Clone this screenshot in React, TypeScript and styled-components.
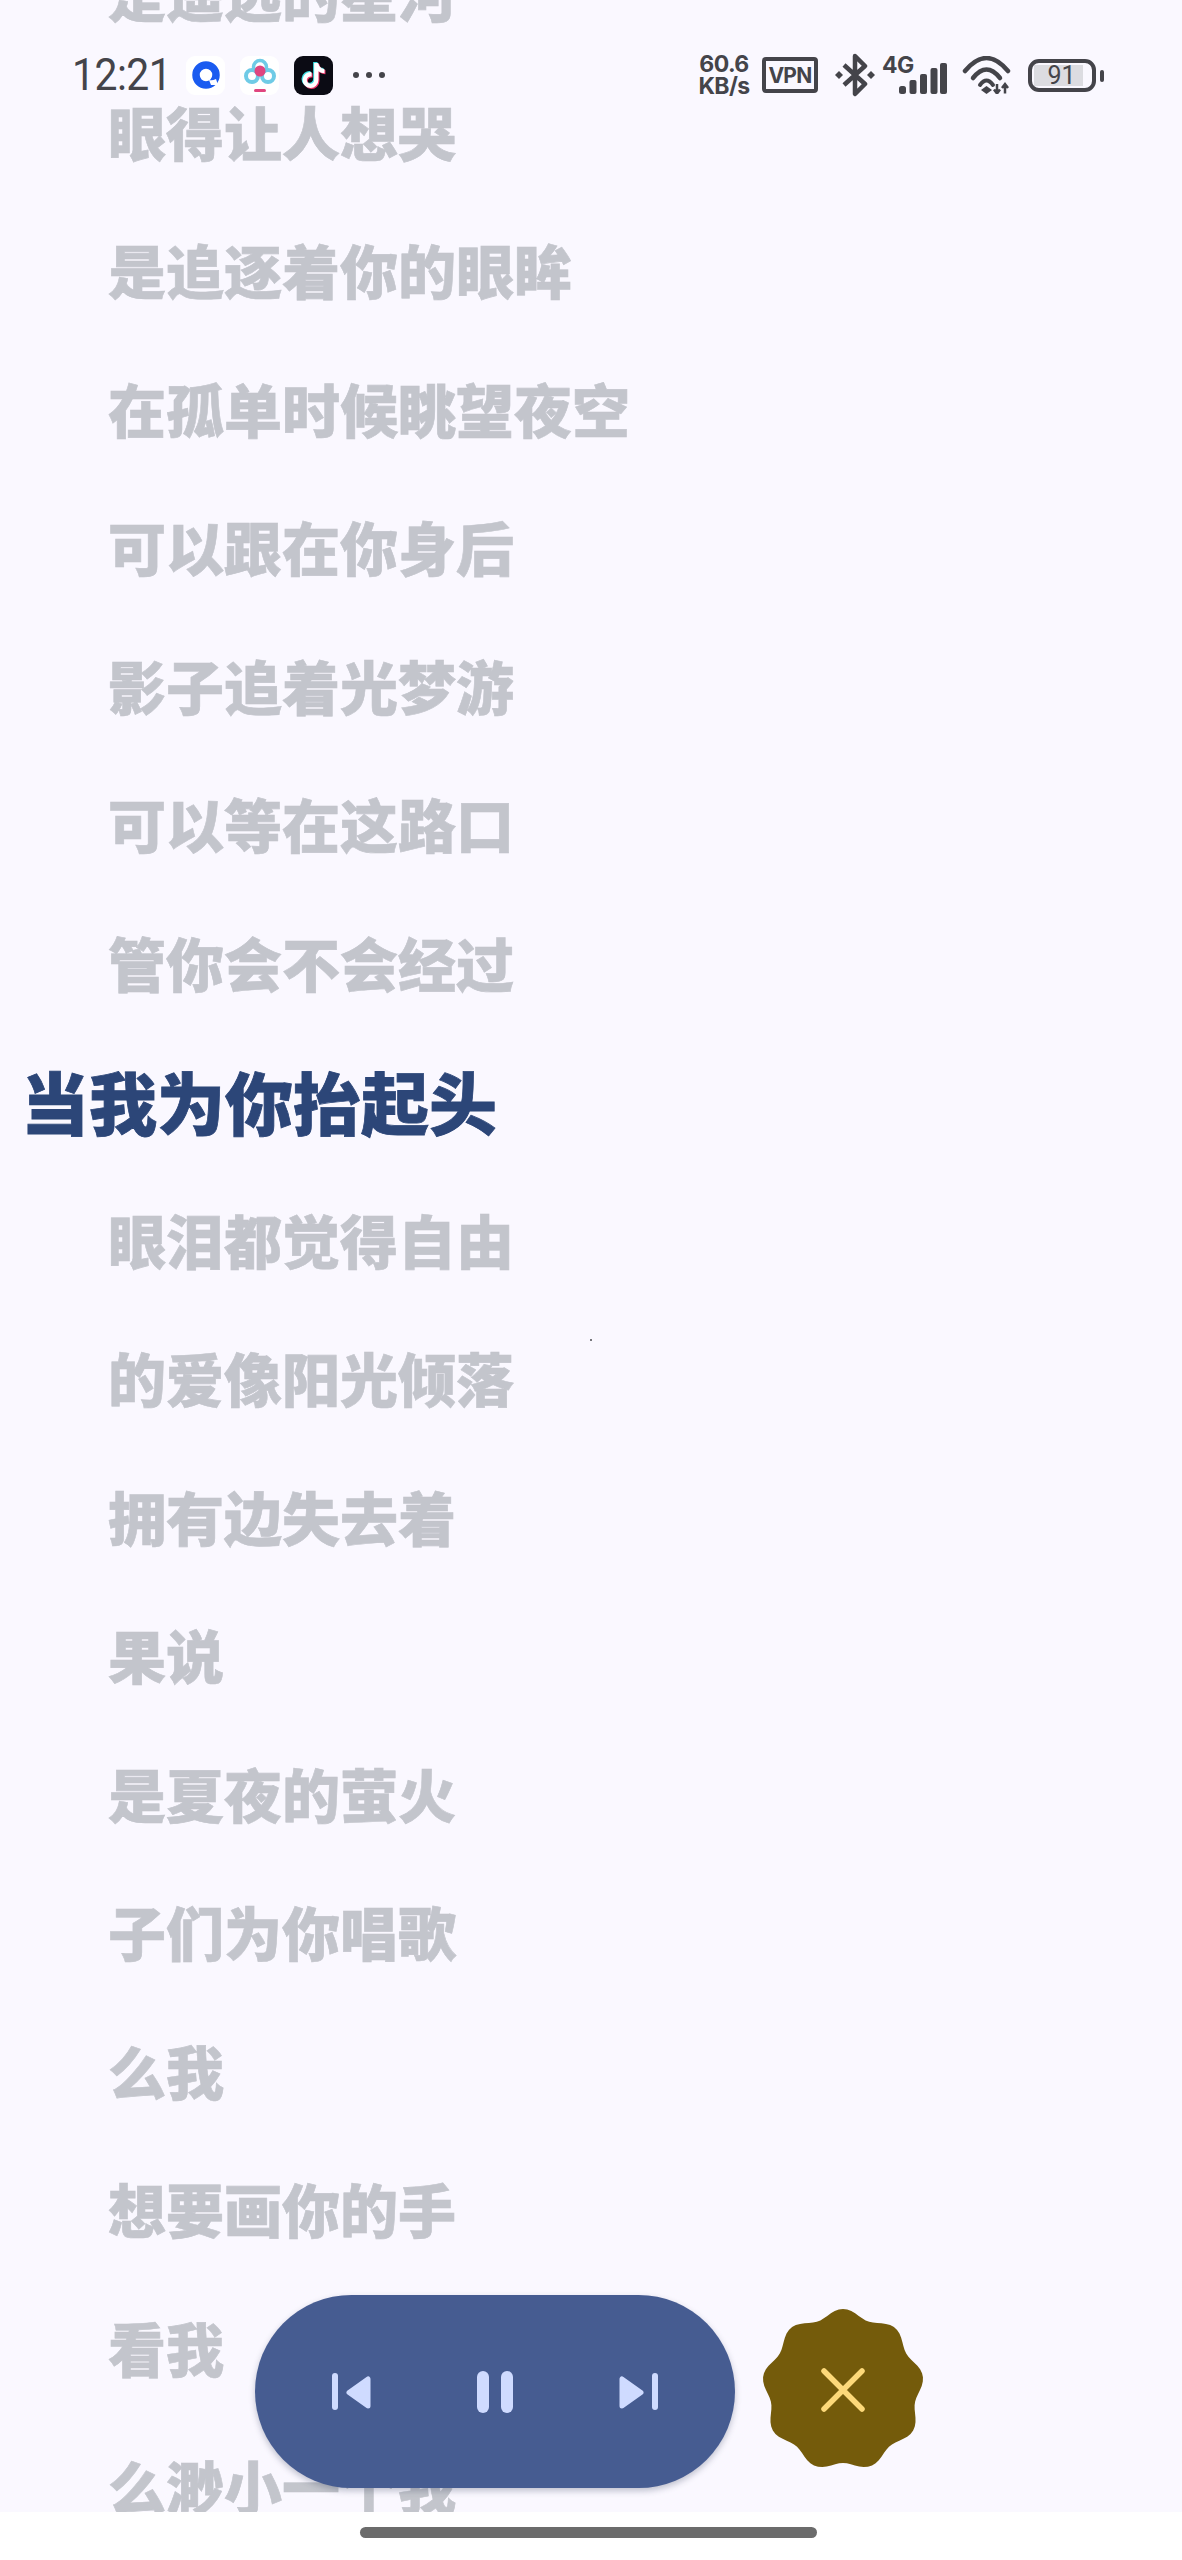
import React from 'react';
import styled, { createGlobalStyle } from 'styled-components';
import { FaTiktok } from 'react-icons/fa';

const GlobalStyle = createGlobalStyle`
  html, body {
    margin: 0;
    padding: 0;
    background: #ffffff;
  }
`;

const Page = styled.div`
  position: relative;
  width: 1182px;
  height: 2560px;
  overflow: hidden;
  display: grid;
  grid-template-rows: 1fr 48px;
  font-family: 'Noto Sans CJK SC', sans-serif;
`;

const LyricPane = styled.div`
  background: #faf8ff;
  overflow: hidden;
`;

const LyricList = styled.div`
  margin-top: -77px;
  display: flex;
  flex-direction: column;
`;

const LyricLine = styled.div<{ $active?: boolean }>`
  height: 138.5px;
  display: flex;
  align-items: center;
  padding-left: ${(p) => (p.$active ? '21px' : '108px')};
  font-size: ${(p) => (p.$active ? '68px' : '58px')};
  font-weight: 900;
  -webkit-text-stroke: ${(p) => (p.$active ? '0.8px' : '0.6px')} currentColor;
  color: ${(p) => (p.$active ? '#2c4678' : '#c3c5cc')};
  white-space: nowrap;
`;

const HomeStrip = styled.div`
  background: #ffffff;
  display: flex;
  justify-content: center;
  padding: 15px 6px 0 0;
`;

const HomeBar = styled.div`
  width: 457px;
  height: 11px;
  border-radius: 6px;
  background: #6b6b6b;
`;

const Speck = styled.div`
  position: absolute;
  left: 590px;
  top: 1339px;
  width: 2px;
  height: 2px;
  background: #77777c;
`;

const StatusBar = styled.div`
  position: absolute;
  top: 50px;
  left: 72px;
  right: 79px;
  height: 50px;
  display: flex;
  justify-content: space-between;
  align-items: center;
  color: #44444a;
`;

const StatusGroup = styled.div`
  display: flex;
  align-items: center;
`;

const Clock = styled.div`
  width: 92px;
  margin-right: 22px;
  font-family: Roboto, sans-serif;
  font-size: 44px;
  line-height: 50px;
  letter-spacing: -0.6px;
  transform: scaleX(0.93);
  transform-origin: left center;
  white-space: nowrap;
`;

const AppTile = styled.div<{ $dark?: boolean }>`
  position: relative;
  width: 39px;
  height: 39px;
  margin-right: 15px;
  border-radius: 9px;
  background: ${(p) => (p.$dark ? '#0b0b14' : '#ffffff')};
  display: flex;
  align-items: center;
  justify-content: center;
`;

const TikTokLayer = styled(FaTiktok)<{ $shift: number }>`
  position: absolute;
  left: ${(p) => 8 + p.$shift}px;
  top: ${(p) => 7 + p.$shift}px;
  width: 23px;
  height: 25px;
`;

const MoreDots = styled.div`
  display: flex;
  gap: 7px;
  margin-left: 5px;
`;

const Dot = styled.span`
  width: 6px;
  height: 6px;
  border-radius: 50%;
  background: #44444a;
`;

const NetSpeed = styled.div`
  width: 54px;
  margin-right: 11px;
  font-family: Inter, sans-serif;
  font-weight: 700;
  font-size: 23px;
  line-height: 22px;
  letter-spacing: -0.6px;
  text-align: center;
  white-space: nowrap;
`;

const VpnBox = styled.div`
  box-sizing: border-box;
  width: 56px;
  height: 36px;
  margin-right: 17px;
  border: 4px solid #44444a;
  border-radius: 4px;
  display: flex;
  align-items: center;
  justify-content: center;
  font-family: Inter, sans-serif;
  font-weight: 700;
  font-size: 21px;
  letter-spacing: -0.7px;
`;

const Bluetooth = styled.svg`
  width: 40px;
  height: 44px;
  margin-right: 7px;
`;

const Cell = styled.div`
  position: relative;
  width: 66px;
  height: 38px;
  margin-right: 14px;
`;

const CellLabel = styled.span`
  position: absolute;
  left: 0;
  top: -2px;
  font-family: Inter, sans-serif;
  font-weight: 700;
  font-size: 23px;
  line-height: 22px;
  letter-spacing: -0.5px;
`;

const CellBars = styled.svg`
  position: absolute;
  right: 0;
  bottom: 0;
  width: 50px;
  height: 32px;
`;

const Wifi = styled.svg`
  width: 50px;
  height: 38px;
  margin-right: 16px;
`;

const Battery = styled.div`
  position: relative;
  box-sizing: border-box;
  width: 68px;
  height: 33px;
  border: 4px solid #44444a;
  border-radius: 11px;
  padding: 2px;
  margin-right: 7px;

  &::after {
    content: '';
    position: absolute;
    right: -12px;
    top: 7px;
    width: 4px;
    height: 12px;
    border-radius: 2px;
    background: #44444a;
  }
`;

const BatteryFill = styled.div`
  width: 49px;
  height: 100%;
  background: #dcdce1;
  font-family: Roboto, sans-serif;
  font-size: 25px;
  line-height: 21px;
  text-align: center;
  padding-left: 6px;
  box-sizing: border-box;
  white-space: nowrap;
`;

const Controls = styled.div`
  position: absolute;
  left: 255px;
  bottom: 72px;
  display: flex;
  align-items: center;
  gap: 26px;
`;

const Pill = styled.div`
  width: 480px;
  height: 193px;
  border-radius: 97px;
  background: #465c91;
  box-shadow: 0 3px 6px rgba(40, 50, 80, 0.28);
  display: grid;
  grid-template-columns: repeat(3, 144px);
  justify-content: center;
  align-items: center;
  justify-items: center;
`;

const TrackIcon = styled.svg<{ $flip?: boolean }>`
  width: 40px;
  height: 42px;
  transform: ${(p) => (p.$flip ? 'scaleX(-1)' : 'none')};
`;

const PauseIcon = styled.svg`
  width: 36px;
  height: 42px;
`;

const Fab = styled.svg`
  width: 164px;
  height: 164px;
  margin-bottom: 3px;
`;

const lyrics = [
  '是遥远的星河',
  '眼得让人想哭',
  '是追逐着你的眼眸',
  '在孤单时候眺望夜空',
  '可以跟在你身后',
  '影子追着光梦游',
  '可以等在这路口',
  '管你会不会经过',
  '当我为你抬起头',
  '眼泪都觉得自由',
  '的爱像阳光倾落',
  '拥有边失去着',
  '果说',
  '是夏夜的萤火',
  '子们为你唱歌',
  '么我',
  '想要画你的手',
  '看我',
  '么渺小一个我',
];

// nine-lobed cookie outline around the centre of an 164 box
const cookiePath = () => {
  const pts: string[] = [];
  for (let i = 0; i < 360; i += 3) {
    const a = (i * Math.PI) / 180;
    const r = 77 + 4 * Math.cos(9 * a);
    const x = 82 + r * Math.sin(a);
    const y = 82 - r * Math.cos(a);
    pts.push(`${x.toFixed(2)} ${y.toFixed(2)}`);
  }
  return `M${pts.join('L')}Z`;
};

const TrackGlyph = ({ flip }: { flip?: boolean }) => (
  <TrackIcon viewBox="0 0 40 42" $flip={flip}>
    <rect x="1" y="2" width="6" height="37" rx="3" fill="#cfdbff" />
    <path d="M37 8 V35 L18 21.5 Z" fill="#cfdbff" stroke="#cfdbff" strokeWidth="5" strokeLinejoin="round" />
  </TrackIcon>
);

const App = () => {
  return (
    <Page>
      <GlobalStyle />
      <LyricPane>
        <LyricList>
          {lyrics.map((line) => (
            <LyricLine key={line} $active={line === '当我为你抬起头'}>
              {line}
            </LyricLine>
          ))}
        </LyricList>
      </LyricPane>
      <HomeStrip>
        <HomeBar />
      </HomeStrip>

      <Speck />

      <StatusBar>
        <StatusGroup>
          <Clock>12:21</Clock>
          <AppTile>
            <svg width="30" height="30" viewBox="0 0 30 30">
              <circle cx="15" cy="15" r="10" fill="none" stroke="#1a5bf0" strokeWidth="7.5" />
              <path d="M18 20 Q21 21 25 19 L27 25 L20 25 Z" fill="#ffffff" />
            </svg>
          </AppTile>
          <AppTile>
            <svg width="36" height="38" viewBox="0 0 36 38">
              <circle cx="18" cy="11" r="6.5" fill="none" stroke="#6fcbe6" strokeWidth="3.5" />
              <circle cx="10" cy="20" r="6" fill="none" stroke="#6fcbe6" strokeWidth="4" />
              <circle cx="26" cy="20" r="6" fill="none" stroke="#6fcbe6" strokeWidth="4" />
              <circle cx="18" cy="15" r="5.5" fill="#e0457f" />
              <rect x="12" y="33" width="12" height="3" rx="1.5" fill="#e0457f" />
            </svg>
          </AppTile>
          <AppTile $dark>
            <TikTokLayer $shift={-1} color="#3fe0e4" />
            <TikTokLayer $shift={1} color="#f0386b" />
            <TikTokLayer $shift={0} color="#ffffff" />
          </AppTile>
          <MoreDots>
            <Dot />
            <Dot />
            <Dot />
          </MoreDots>
        </StatusGroup>

        <StatusGroup>
          <NetSpeed>
            60.6
            <br />
            KB/s
          </NetSpeed>
          <VpnBox>VPN</VpnBox>
          <Bluetooth viewBox="0 0 40 44" fill="none" stroke="#44444a" strokeWidth="4.5" strokeLinejoin="round">
            <path d="M9 12 L30 31 L20 41 V3 L30 13 L9 32" />
            <path d="M0 22 L4 18 L8 22 L4 26 Z" fill="#44444a" stroke="none" />
            <path d="M32 22 L36 18 L40 22 L36 26 Z" fill="#44444a" stroke="none" />
          </Bluetooth>
          <Cell>
            <CellLabel>4G</CellLabel>
            <CellBars viewBox="0 0 50 32" fill="#44444a">
              <rect x="1" y="24" width="7" height="8" rx="2.5" />
              <rect x="11.5" y="18" width="7" height="14" rx="2" />
              <rect x="22" y="12" width="7" height="20" rx="2" />
              <rect x="32.5" y="6" width="7" height="26" rx="2" />
              <rect x="42" y="1" width="7" height="31" rx="2" />
            </CellBars>
          </Cell>
          <Wifi viewBox="0 0 50 38" fill="none" stroke="#44444a" strokeLinecap="round">
            <path d="M3 15 Q24.5 -11 46 15" strokeWidth="4.5" />
            <path d="M11 22 Q24.5 5 38 22" strokeWidth="4.5" />
            <path d="M18 29 Q24.5 20 31 29" strokeWidth="4" />
            <path d="M24.5 30 L30 34 L24.5 38 L19 34 Z" fill="#44444a" stroke="none" />
            <path d="M35 28 V37 M32 33.5 L35 37.5 L38 33.5 M43 37.5 V28.5 M40 32 L43 28 L46 32" strokeWidth="2.5" strokeLinecap="butt" />
          </Wifi>
          <Battery>
            <BatteryFill>91</BatteryFill>
          </Battery>
        </StatusGroup>
      </StatusBar>

      <Controls>
        <Pill>
          <TrackGlyph />
          <PauseIcon viewBox="0 0 36 42" fill="#cfdbff">
            <rect x="0" y="0" width="12" height="42" rx="6" />
            <rect x="24" y="0" width="12" height="42" rx="6" />
          </PauseIcon>
          <TrackGlyph flip />
        </Pill>
        <Fab viewBox="0 0 164 164">
          <path d={cookiePath()} fill="#745b0b" />
          <path d="M63 63 L101 101 M101 63 L63 101" stroke="#fdd97a" strokeWidth="5.5" strokeLinecap="round" />
        </Fab>
      </Controls>
    </Page>
  );
};

export default App;
